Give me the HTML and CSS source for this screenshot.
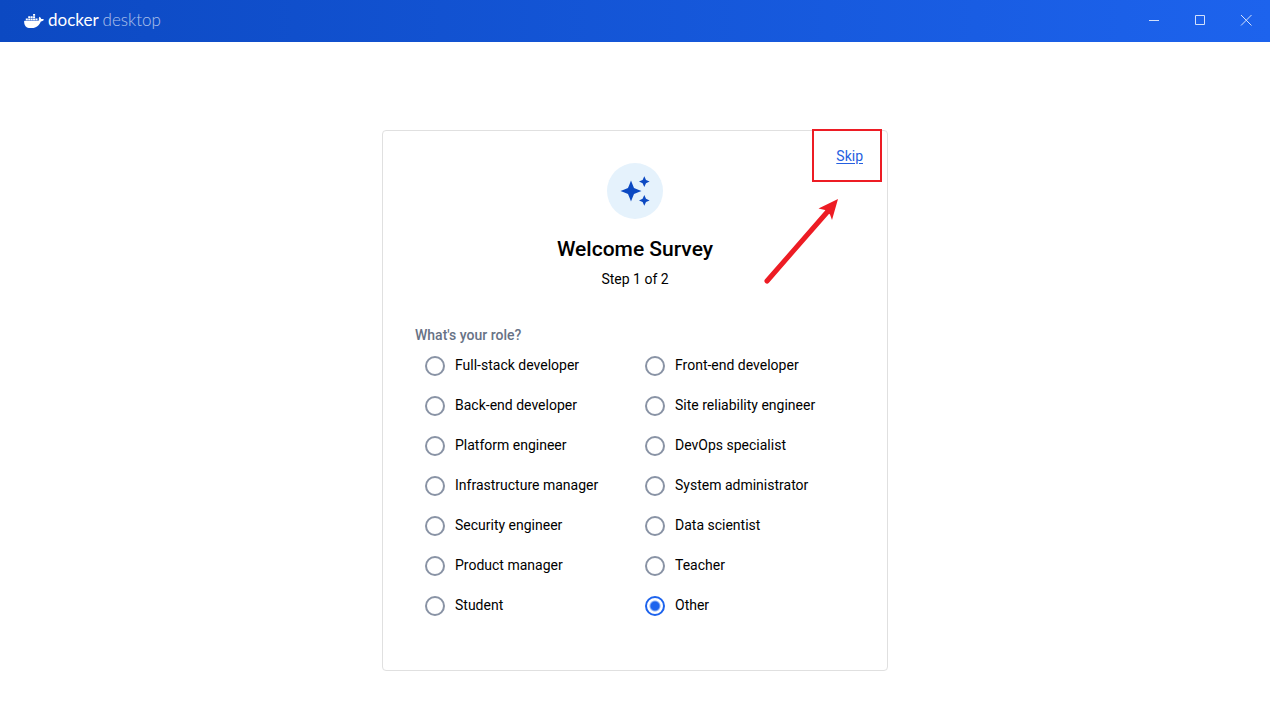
FILE: index.html
```html
<!DOCTYPE html>
<html lang="en">
<head>
<meta charset="utf-8">
<meta name="viewport" content="width=device-width, initial-scale=1">
<title>Docker Desktop</title>
<link rel="stylesheet" href="styles.css">
</head>
<body>
<header class="titlebar">
  <div class="brand">
    <svg class="brand-logo" viewBox="0 3.4 24 17" aria-hidden="true"><path fill="currentColor" d="M13.983 11.078h2.119a.186.186 0 00.186-.185V9.006a.186.186 0 00-.186-.186h-2.119a.185.185 0 00-.185.185v1.888c0 .102.083.185.185.185m-2.954-5.43h2.118a.186.186 0 00.186-.186V3.574a.186.186 0 00-.186-.185h-2.118a.185.185 0 00-.185.185v1.888c0 .102.082.185.185.185m0 2.716h2.118a.187.187 0 00.186-.186V6.29a.186.186 0 00-.186-.185h-2.118a.185.185 0 00-.185.185v1.887c0 .102.082.185.185.186m-2.93 0h2.12a.186.186 0 00.184-.186V6.29a.185.185 0 00-.185-.185H8.1a.185.185 0 00-.185.185v1.887c0 .102.083.185.185.186m-2.964 0h2.119a.186.186 0 00.185-.186V6.29a.185.185 0 00-.185-.185H5.136a.186.186 0 00-.186.185v1.887c0 .102.084.185.186.186m5.893 2.715h2.118a.186.186 0 00.186-.185V9.006a.186.186 0 00-.186-.186h-2.118a.185.185 0 00-.185.185v1.888c0 .102.082.185.185.185m-2.93 0h2.12a.185.185 0 00.184-.185V9.006a.185.185 0 00-.184-.186h-2.12a.185.185 0 00-.184.185v1.888c0 .102.083.185.185.185m-2.964 0h2.119a.185.185 0 00.185-.185V9.006a.185.185 0 00-.184-.186h-2.12a.186.186 0 00-.186.186v1.887c0 .102.084.185.186.185m-2.92 0h2.12a.185.185 0 00.184-.185V9.006a.185.185 0 00-.184-.186h-2.12a.185.185 0 00-.184.185v1.888c0 .102.082.185.185.185M23.763 9.89c-.065-.051-.672-.51-1.954-.51-.338.001-.676.03-1.01.087-.248-1.7-1.653-2.53-1.716-2.566l-.344-.199-.226.327c-.284.438-.49.922-.612 1.43-.23.97-.09 1.882.403 2.661-.595.332-1.55.413-1.744.42H.751a.751.751 0 00-.75.748 11.376 11.376 0 00.692 4.062c.545 1.428 1.355 2.48 2.41 3.124 1.18.723 3.1 1.137 5.275 1.137.983.003 1.963-.086 2.93-.266a12.248 12.248 0 003.823-1.389c.98-.567 1.86-1.288 2.61-2.136 1.252-1.418 1.998-2.997 2.553-4.4h.221c1.372 0 2.215-.549 2.68-1.009.309-.293.55-.65.707-1.046l.098-.288Z"/></svg>
    <span class="brand-name">docker <span class="brand-product">desktop</span></span>
  </div>
  <div class="window-controls">
    <button class="window-button" type="button" aria-label="Minimize"><svg class="window-icon" viewBox="0 0 12 12"><path d="M1 6.5h10"/></svg></button>
    <button class="window-button" type="button" aria-label="Maximize"><svg class="window-icon" viewBox="0 0 12 12"><path d="M1.5 1.5h9v9h-9z"/></svg></button>
    <button class="window-button" type="button" aria-label="Close"><svg class="window-icon" viewBox="0 0 12 12"><path d="M1 1l10.500 10.500M11.500 1L1 11.500"/></svg></button>
  </div>
</header>
<main class="page">
  <form class="card">
    <a class="skip" href="#">Skip</a>
    <div class="badge">
      <svg class="badge-icon" viewBox="0 0 32 32" aria-hidden="true"><path fill="currentColor" d="M12 5.500Q13.500 9.500 15 13Q18.500 14.500 22.500 16Q18.500 17.500 15 19Q13.500 22.500 12 26.500Q10.500 22.500 9 19Q5.500 17.500 1.500 16Q5.500 14.500 9 13Q10.500 9.500 12 5.500ZM25.300 1.300L27 4.900L30.600 6.600L27 8.300L25.300 11.900L23.600 8.300L20 6.600L23.600 4.900ZM25.300 20.100L27 23.700L30.600 25.400L27 27.100L25.300 30.700L23.600 27.100L20 25.400L23.600 23.700Z"/></svg>
    </div>
    <h1 class="title">Welcome Survey</h1>
    <p class="step">Step 1 of 2</p>
    <fieldset class="roles">
      <legend class="question">What's your role?</legend>
      <div class="options">
        <label class="option"><input class="radio" type="radio" name="role">Full-stack developer</label>
        <label class="option"><input class="radio" type="radio" name="role">Front-end developer</label>
        <label class="option"><input class="radio" type="radio" name="role">Back-end developer</label>
        <label class="option"><input class="radio" type="radio" name="role">Site reliability engineer</label>
        <label class="option"><input class="radio" type="radio" name="role">Platform engineer</label>
        <label class="option"><input class="radio" type="radio" name="role">DevOps specialist</label>
        <label class="option"><input class="radio" type="radio" name="role">Infrastructure manager</label>
        <label class="option"><input class="radio" type="radio" name="role">System administrator</label>
        <label class="option"><input class="radio" type="radio" name="role">Security engineer</label>
        <label class="option"><input class="radio" type="radio" name="role">Data scientist</label>
        <label class="option"><input class="radio" type="radio" name="role">Product manager</label>
        <label class="option"><input class="radio" type="radio" name="role">Teacher</label>
        <label class="option"><input class="radio" type="radio" name="role">Student</label>
        <label class="option"><input class="radio" type="radio" name="role" checked>Other</label>
      </div>
    </fieldset>
    <div class="highlight" aria-hidden="true"></div>
    <svg class="arrow" viewBox="0 0 76 88" aria-hidden="true"><path d="M4 83L66 12" fill="none" stroke="#ed1c24" stroke-width="5" stroke-linecap="round"/><path d="M75 1L55.500 10.500L62 12L67 16.500L69 22Z" fill="#ed1c24"/></svg>
  </form>
</main>
</body>
</html>
```
FILE: styles.css
```css
* {
  box-sizing: border-box;
}

body {
  margin: 0;
  background: #fff;
  color: #000;
  font-family: Roboto, "Liberation Sans", sans-serif;
  font-size: 14px;
  line-height: 20px;
}

.titlebar {
  display: flex;
  justify-content: space-between;
  height: 42px;
  padding: 0 1px 0 24px;
  background: linear-gradient(90deg, #0c49c2, #1d63ed);
  color: #fff;
}

.brand {
  display: flex;
  align-items: center;
  gap: 4px;
}

.brand-logo {
  width: 20px;
  height: 14px;
}

.brand-name {
  font-family: Lato, sans-serif;
  font-size: 17px;
  line-height: 40px;
  padding-bottom: 2px;
}

.brand-product {
  font-weight: 300;
  opacity: 0.65;
}

.window-controls {
  display: flex;
}

.window-button {
  display: flex;
  align-items: center;
  justify-content: center;
  width: 46px;
  height: 40px;
  padding: 0;
  border: 0;
  background: none;
  color: #d2e0fb;
}

.window-icon {
  width: 12px;
  height: 12px;
  fill: none;
  stroke: currentColor;
}

.page {
  display: flex;
  justify-content: center;
  padding: 88px 24px 48px;
}

.card {
  position: relative;
  display: flex;
  flex-direction: column;
  align-items: center;
  width: 100%;
  max-width: 506px;
  padding: 32px 32px 44px;
  border: 1px solid #e0e0e0;
  border-radius: 4px;
}

.skip {
  position: absolute;
  top: 15px;
  right: 24px;
  color: #2560e0;
  text-underline-offset: 2px;
}

.badge {
  display: flex;
  align-items: center;
  justify-content: center;
  width: 56px;
  height: 56px;
  border-radius: 50%;
  background: #e5f2fc;
  color: #0c49c2;
}

.badge-icon {
  width: 32px;
  height: 32px;
}

.title {
  margin: 16px 0 8px;
  font-size: 21px;
  font-weight: 500;
  line-height: 28px;
}

.step {
  margin: 0 0 38px;
  line-height: 16px;
}

.roles {
  width: 100%;
  margin: 0;
  padding: 0;
  border: 0;
}

.question {
  padding: 0;
  color: #677285;
  font-weight: 500;
}

.options {
  display: grid;
  grid-template-columns: 1fr 1fr;
  padding-top: 1px;
  line-height: 38px;
}

.option {
  display: flex;
  align-items: flex-start;
  gap: 10px;
  height: 40px;
  padding-left: 10px;
}

.radio {
  appearance: none;
  flex: none;
  width: 20px;
  height: 20px;
  margin: 10px 0 0;
  border: 2px solid #8993a5;
  border-radius: 50%;
}

.radio:checked {
  border-color: #1d63ed;
  background: radial-gradient(circle, #1d63ed 4px, transparent 6px);
}

.highlight {
  position: absolute;
  top: -2px;
  right: 5px;
  width: 70px;
  height: 53px;
  border: 2px solid #ed1c24;
  pointer-events: none;
}

.arrow {
  position: absolute;
  top: 67px;
  right: 48px;
  width: 76px;
  height: 88px;
  pointer-events: none;
}

@media (max-width: 480px) {
  .options {
    grid-template-columns: 1fr;
  }
}
```
